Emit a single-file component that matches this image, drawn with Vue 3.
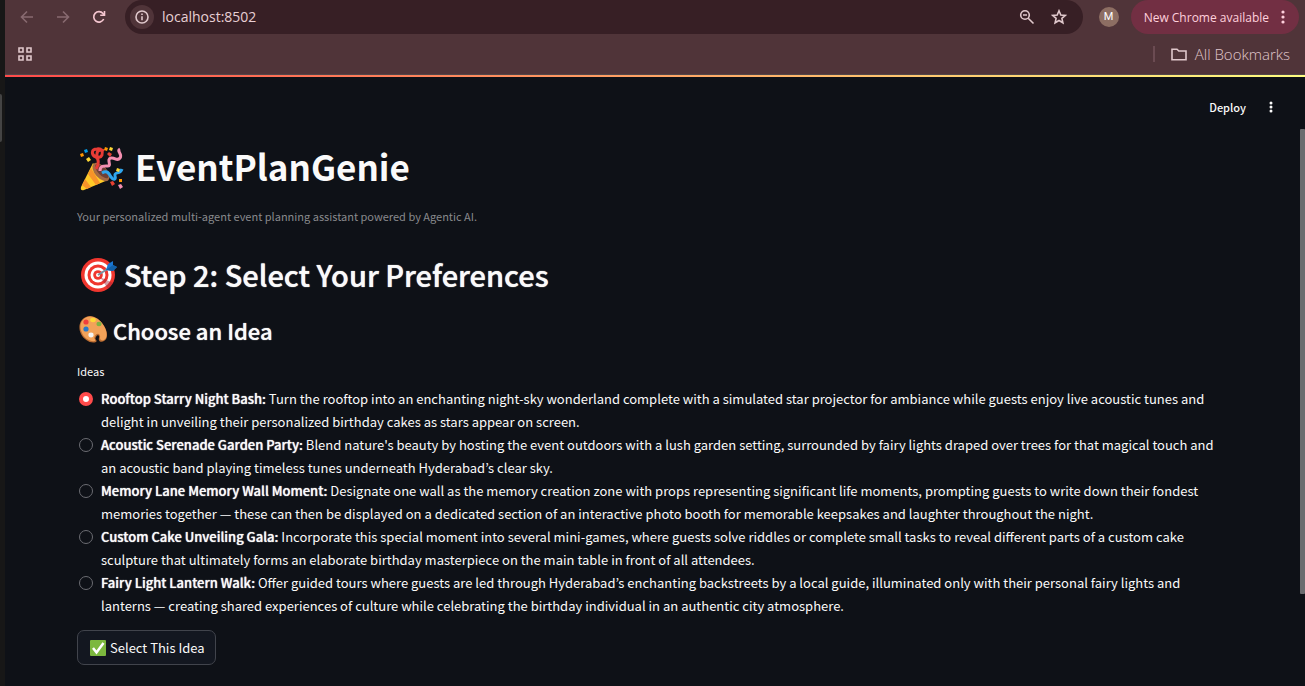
<script setup>
import { ref } from 'vue'

const ideas = [
  { id: 'rooftop', title: 'Rooftop Starry Night Bash:', text: 'Turn the rooftop into an enchanting night-sky wonderland complete with a simulated star projector for ambiance while guests enjoy live acoustic tunes and delight in unveiling their personalized birthday cakes as stars appear on screen.' },
  { id: 'garden', title: 'Acoustic Serenade Garden Party:', text: "Blend nature's beauty by hosting the event outdoors with a lush garden setting, surrounded by fairy lights draped over trees for that magical touch and an acoustic band playing timeless tunes underneath Hyderabad’s clear sky." },
  { id: 'memory', title: 'Memory Lane Memory Wall Moment:', text: 'Designate one wall as the memory creation zone with props representing significant life moments, prompting guests to write down their fondest memories together — these can then be displayed on a dedicated section of an interactive photo booth for memorable keepsakes and laughter throughout the night.' },
  { id: 'cake', title: 'Custom Cake Unveiling Gala:', text: 'Incorporate this special moment into several mini-games, where guests solve riddles or complete small tasks to reveal different parts of a custom cake sculpture that ultimately forms an elaborate birthday masterpiece on the main table in front of all attendees.' },
  { id: 'lantern', title: 'Fairy Light Lantern Walk:', text: 'Offer guided tours where guests are led through Hyderabad’s enchanting backstreets by a local guide, illuminated only with their personal fairy lights and lanterns — creating shared experiences of culture while celebrating the birthday individual in an authentic city atmosphere.' },
]
const selected = ref('rooftop')
const url = ref('localhost:8502')
</script>

<template>
  <div class="screen">
    <aside class="edge"><span class="edge-handle"></span></aside>
    <div class="window">
      <header class="browser">
        <div class="toolbar">
          <nav class="nav">
            <button class="icon-btn dim" aria-label="Back">
              <svg width="14" height="14" viewBox="0 0 14 14"><path d="M13 7H2M7 1.5L1.5 7L7 12.5" /></svg>
            </button>
            <button class="icon-btn dim" aria-label="Forward">
              <svg width="14" height="14" viewBox="0 0 14 14"><path d="M1 7H12M7 1.5L12.5 7L7 12.5" /></svg>
            </button>
            <button class="icon-btn reload" aria-label="Reload">
              <svg width="14" height="14" viewBox="0 0 14 14"><path d="M11.7 9A5.2 5.2 0 1 1 11 3.6L12.3 5M12.5 1V5.3H8.2" /></svg>
            </button>
          </nav>
          <div class="address">
            <button class="site-info" aria-label="Site information">
              <svg width="14" height="14" viewBox="0 0 14 14"><circle cx="7" cy="7" r="6" /><path d="M7 6.3V10.3M7 3.6V5.1" /></svg>
            </button>
            <input v-model="url" class="url" type="text" aria-label="Address" />
            <button class="icon-btn" aria-label="Zoom">
              <svg width="16" height="16" viewBox="0 0 16 16"><circle cx="6" cy="6" r="4.3" /><path d="M4 6H8M9.2 9.2L14.5 14.5" /></svg>
            </button>
            <button class="icon-btn" aria-label="Bookmark this page">
              <svg width="16" height="16" viewBox="0 0 16 16"><path d="M8 1.8L9.8 6L14.3 6.4L10.9 9.4L11.9 13.8L8 11.5L4.1 13.8L5.1 9.4L1.7 6.4L6.2 6Z" /></svg>
            </button>
          </div>
          <button class="avatar" aria-label="Profile M">M</button>
          <button class="update">
            <span>New Chrome available</span>
            <svg width="4" height="14" viewBox="0 0 4 14"><circle cx="2" cy="2" r="1.6" /><circle cx="2" cy="7" r="1.6" /><circle cx="2" cy="12" r="1.6" /></svg>
          </button>
        </div>
        <div class="bookmarks">
          <button class="apps" aria-label="Apps">
            <svg width="14" height="14" viewBox="0 0 14 14"><path d="M1 1H5V5H1ZM9 1H13V5H9ZM1 9H5V13H1ZM9 9H13V13H9Z" /></svg>
          </button>
          <button class="all-bookmarks">
            <svg width="16" height="13" viewBox="0 0 16 13"><path d="M1 1.2H6L7.8 3H15V11.8H1Z" /></svg>
            <span>All Bookmarks</span>
          </button>
        </div>
      </header>

      <div class="app">
        <div class="decoration"></div>
        <div class="app-header">
          <button class="deploy">Deploy</button>
          <button class="menu" aria-label="Main menu">
            <svg width="4" height="12" viewBox="0 0 4 12"><circle cx="2" cy="2" r="1.5" /><circle cx="2" cy="6" r="1.5" /><circle cx="2" cy="10" r="1.5" /></svg>
          </button>
        </div>

        <main class="content">
          <h1>
            <svg class="emoji-lg" viewBox="0 0 46 46" aria-hidden="true">
              <path d="M14 17L2 41Q1 45 5 44L29 34Z" fill="#ffca28" />
              <path d="M12 22L21 37L17 39L9 28ZM6 33L12 41L8 43L3 39Z" fill="#f79329" />
              <ellipse cx="22" cy="26" rx="6" ry="11" transform="rotate(-42 22 26)" fill="#a56a43" />
              <ellipse cx="23" cy="25" rx="4" ry="9" transform="rotate(-42 23 25)" fill="#6d4037" />
              <path d="M17 23C20 18 20 13 17 11C12 9 12 3 18 3C23 2 24 6 23 9C21 13 17 11 18 8C18 4 22 3 25 5" fill="none" stroke="#e93b35" stroke-width="3" />
              <path d="M21 25C21 19 26 20 29 20C33 20 27 13 32 12C36 11 38 16 41 12C44 8 37 5 41 3" fill="none" stroke="#f48fb1" stroke-width="3" />
              <path d="M23 27C28 24 30 27 32 31C35 35 37 33 36 30C35 25 41 29 43 23" fill="none" stroke="#2fa6ee" stroke-width="3" />
              <path d="M5 4L8 3L9 6L6 7Z" fill="#039be5" />
              <path d="M1 8L4 7L5 10L2 11ZM26 1L29 2L28 5L25 4ZM40 33L43 33L43 36L40 36Z" fill="#ff9800" />
              <path d="M7 13L10 11L12 14L9 16ZM31 1L34 2L33 5L30 4ZM38 22L41 23L40 26L37 25Z" fill="#fdd835" />
              <path d="M30 6L33 8L31 11L28 8ZM31 36L34 35L36 38L33 40Z" fill="#e84132" />
              <path d="M39 39L42 38L44 41L41 43Z" fill="#f48fb1" />
            </svg>
            <span>EventPlanGenie</span>
          </h1>
          <p class="caption">Your personalized multi-agent event planning assistant powered by Agentic AI.</p>
          <h2>
            <svg class="emoji-md" viewBox="0 0 38 38" aria-hidden="true">
              <circle cx="18" cy="20" r="17" fill="#f0362e" />
              <circle cx="18" cy="20" r="13.5" fill="#fff" />
              <circle cx="18" cy="20" r="10.500" fill="#f0362e" />
              <circle cx="18" cy="20" r="7.500" fill="#fff" />
              <circle cx="18" cy="20" r="4.800" fill="#f0362e" />
              <circle cx="18" cy="20" r="2" fill="#fff" />
              <path d="M20 22L33 28L28 34Z" fill="#9f2435" opacity="0.45" />
              <path d="M18 20L29 13" stroke="#7890a0" stroke-width="2" />
              <path d="M26 15L28 9L33 6L33 10L37 12L33 16Z" fill="#1976d2" />
              <path d="M26 15L33 10L37 12L33 16Z" fill="#1260a8" />
            </svg>
            <span>Step 2: Select Your Preferences</span>
          </h2>
          <h3>
            <svg class="emoji-sm" viewBox="0 0 30 30" aria-hidden="true">
              <path d="M8 2C14 -1 22 4 26 11C30 17 30 24 26 26C23 28 20 26 21 23C22 20 19 19 18 22C16 25 20 25 18 27C13 29 6 25 3 19C0 13 1 5 8 2Z" fill="#ba6c32" />
              <path d="M9 2C15 0 22 4 26 11C29 16 30 23 26 25C24 26 22 25 22 23C23 19 19 17 17 21C15 24 18 24 17 26C12 27 6 23 4 18C1 12 2 5 9 2Z" fill="#f2a259" />
              <circle cx="8" cy="7" r="2.600" fill="#ef3e3c" />
              <ellipse cx="15" cy="5" rx="2.800" ry="2.200" fill="#fdd835" />
              <ellipse cx="21" cy="9" rx="2.600" ry="2.200" fill="#7cb342" />
              <circle cx="8" cy="14" r="2.600" fill="#2878c8" />
              <ellipse cx="13" cy="20" rx="2.600" ry="2.400" fill="#f5f5f5" />
            </svg>
            <span>Choose an Idea</span>
          </h3>

          <fieldset>
            <legend>Ideas</legend>
            <label v-for="idea in ideas" :key="idea.id" class="idea">
              <input v-model="selected" type="radio" name="idea" :value="idea.id" />
              <span><strong>{{ idea.title }}</strong> {{ idea.text }}</span>
            </label>
          </fieldset>

          <button class="select">
            <svg width="16" height="16" viewBox="0 0 16 16" aria-hidden="true">
              <rect width="16" height="16" rx="1" fill="#7cb83e" />
              <path d="M3 8L6.500 12.500L13.500 3" fill="none" stroke="#fff" stroke-width="2.500" />
            </svg>
            <span>Select This Idea</span>
          </button>
        </main>
        <span class="scrollbar"></span>
      </div>
    </div>
  </div>
</template>

<style>
body {
  background: #0e1117;
}
</style>

<style scoped>
* {
  box-sizing: border-box;
}
.screen {
  display: flex;
  min-height: 100vh;
  color: #fafafa;
  font-family: "Noto Sans CJK KR", "Noto Sans", sans-serif;
}
button {
  padding: 0;
  border: 0;
  background: none;
  color: inherit;
  font: inherit;
}
svg {
  display: block;
  flex: none;
}
.edge {
  position: relative;
  flex: 0 0 5px;
  background: #171717;
}
.edge-handle {
  position: absolute;
  top: 94px;
  left: 0;
  width: 2px;
  height: 48px;
  border-radius: 0 2px 2px 0;
  background: #444;
}
.window {
  display: flex;
  flex: 1;
  flex-direction: column;
  min-width: 0;
}
.browser {
  border-bottom: 1px solid #51484b;
  background: #503439;
  color: #e0c8cc;
  font-family: "Open Sans", sans-serif;
}
.browser svg {
  fill: none;
  stroke: currentColor;
  stroke-width: 1.6;
}
.toolbar {
  display: flex;
  align-items: center;
  height: 34px;
  padding-right: 6px;
}
.nav {
  display: flex;
  gap: 20px;
  width: 120px;
  padding-left: 14px;
}
.icon-btn {
  display: grid;
  place-items: center;
  width: 16px;
  height: 16px;
}
.dim {
  color: #886a70;
}
.reload {
  color: #f5c6d0;
}
.address {
  display: flex;
  flex: 1;
  align-items: center;
  gap: 16px;
  height: 34px;
  padding: 0 16px 0 5px;
  border-radius: 17px;
  background: #371f25;
}
.site-info {
  display: grid;
  place-items: center;
  width: 24px;
  height: 24px;
  border-radius: 50%;
  background: #503439;
}
.url {
  flex: 1;
  min-width: 0;
  margin-left: -8px;
  padding: 0;
  border: 0;
  outline: 0;
  background: none;
  color: #e8cfd4;
  font: 14px/20px "Open Sans", sans-serif;
}
.avatar {
  width: 20px;
  height: 20px;
  margin: 0 12px 0 16px;
  border-radius: 50%;
  background: #8d6e63;
  color: #fff;
  font: 11px/20px Roboto, sans-serif;
}
.update {
  display: flex;
  align-items: center;
  gap: 12px;
  height: 34px;
  padding: 0 14px 0 13px;
  border-radius: 17px;
  background: #722f43;
  color: #ffd0dc;
  font-size: 12px;
}
.update svg,
.menu svg {
  fill: currentColor;
  stroke: none;
}
.bookmarks {
  display: flex;
  align-items: center;
  justify-content: space-between;
  height: 40px;
  padding: 0 15px 0 13px;
}
.all-bookmarks {
  display: flex;
  align-items: center;
  gap: 8px;
  height: 16px;
  padding-left: 16px;
  border-left: 2px solid #6b4b52;
  font-size: 15px;
  font-weight: 300;
}
.app {
  position: relative;
  flex: 1;
  background: #0e1117;
}
.decoration {
  height: 2px;
  background: linear-gradient(90deg, #ff4b4b, #fffd80);
}
.app-header {
  display: flex;
  align-items: center;
  justify-content: flex-end;
  gap: 23px;
  height: 60px;
  padding-right: 32px;
}
.deploy {
  font-size: 11px;
  font-weight: 500;
}
.content {
  padding: 4px 72px 20px;
}
h1,
h2,
h3 {
  display: flex;
  align-items: center;
  margin: 0;
}
h1 {
  gap: 10px;
  height: 56px;
  font-size: 35px;
  font-weight: 700;
  line-height: 50px;
}
h1 span {
  padding-bottom: 6px;
}
h2 {
  gap: 6px;
  height: 40px;
  margin-top: 29px;
  font-size: 29px;
  font-weight: 500;
  text-shadow: 0 0 1px currentColor;
}
h3 {
  gap: 5px;
  height: 32px;
  margin-top: 20px;
  font-size: 22px;
  font-weight: 500;
  text-shadow: 0 0 1px currentColor;
}
.emoji-lg {
  width: 46px;
  height: 46px;
  margin-left: 2px;
}
.emoji-md {
  width: 38px;
  height: 38px;
  margin-left: 3px;
}
.emoji-sm {
  width: 30px;
  height: 30px;
  margin-left: 1px;
}
.caption {
  margin: 10px 0 0;
  color: #898a8d;
  font-size: 11px;
  line-height: 18px;
}
fieldset {
  margin: 16px 0 0;
  padding: 0;
  border: 0;
}
legend {
  padding: 0;
  margin-bottom: 7px;
  font-size: 11px;
  line-height: 18px;
}
.idea {
  display: flex;
  align-items: flex-start;
  gap: 8px;
  padding-left: 2px;
  font-size: 13px;
  line-height: 23px;
}
.idea span {
  flex: 1;
  max-width: 1122px;
}
.idea strong {
  font-weight: 500;
  text-shadow: 0 0 1px currentColor;
}
.idea input {
  flex: none;
  width: 14px;
  height: 14px;
  margin: 5px 0 0;
  border: 1px solid #6b6c72;
  border-radius: 50%;
  appearance: none;
}
.idea input:checked {
  border: 4px solid #ff4b4b;
  background: #fff;
}
.select {
  display: flex;
  align-items: center;
  gap: 4px;
  height: 35px;
  margin-top: 13px;
  padding: 0 10px 0 12px;
  border: 1px solid #41444c;
  border-radius: 7px;
  background: #131720;
  font-size: 13px;
}
.scrollbar {
  position: absolute;
  top: 54px;
  right: 0;
  width: 5px;
  height: 465px;
  border-radius: 1px;
  background: #6b6c6f;
}
</style>
